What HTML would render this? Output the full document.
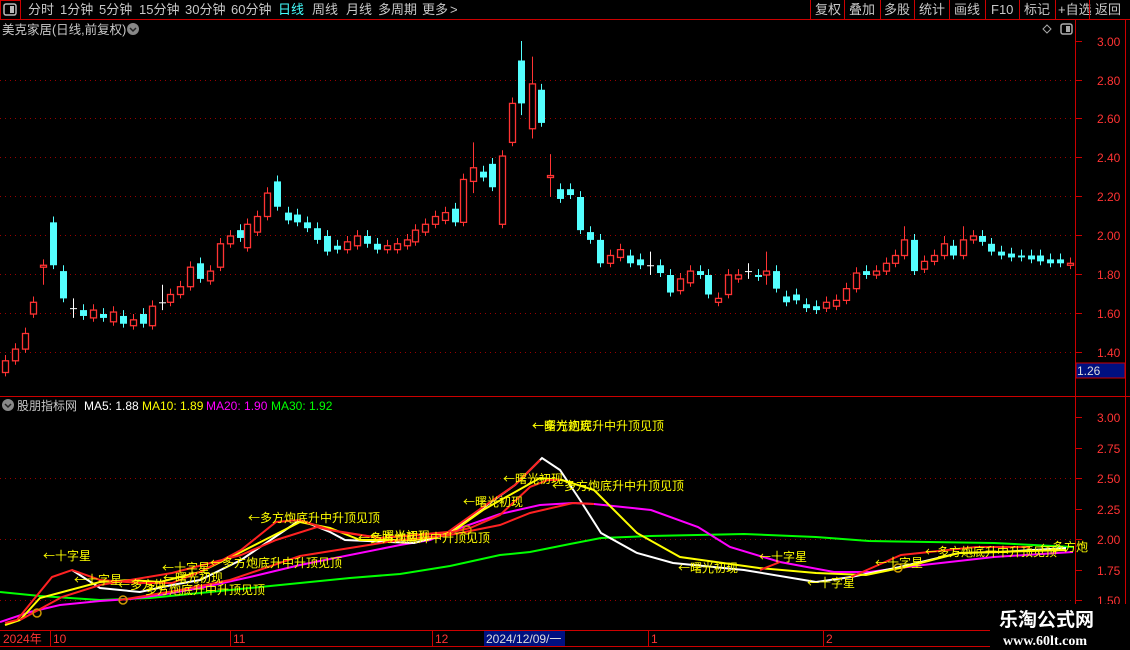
<!DOCTYPE html>
<html><head><meta charset="utf-8"><style>
html,body{margin:0;padding:0;background:#000;width:1130px;height:650px;overflow:hidden;font-family:"Liberation Sans","Noto Sans CJK SC",sans-serif;}
svg{position:absolute;left:0;top:0}
text{font-family:"Liberation Sans","Noto Sans CJK SC",sans-serif}
#lbl text{font-family:"Noto Sans CJK SC",sans-serif}
</style></head><body>
<svg id="s" width="1130" height="650" viewBox="0 0 1130 650">
<line x1="0" y1="19.5" x2="1130" y2="19.5" stroke="#c00" />
<rect x="0.5" y="0.5" width="20" height="19" fill="none" stroke="#c00"/>
<rect x="4" y="4" width="12" height="11" rx="2" fill="none" stroke="#bbb" stroke-width="1.5"/>
<rect x="10" y="6" width="4" height="7" fill="#bbb"/>
<g font-size="13" fill="#c8c8c8">
<text x="28" y="14">分时</text><text x="60" y="14">1分钟</text><text x="99" y="14">5分钟</text><text x="139" y="14">15分钟</text><text x="185" y="14">30分钟</text><text x="231" y="14">60分钟</text>
<text x="278" y="14" fill="#4ff">日线</text><text x="312" y="14">周线</text><text x="346" y="14">月线</text><text x="378" y="14">多周期</text><text x="422" y="14">更多</text><text x="450" y="14">&gt;</text>
<text x="815" y="14">复权</text><text x="849" y="14">叠加</text><text x="884" y="14">多股</text><text x="919" y="14">统计</text><text x="954" y="14">画线</text><text x="991" y="14">F10</text><text x="1024" y="14">标记</text><text x="1058" y="14">+自选</text><text x="1095" y="14">返回</text>
</g>
<g stroke="#c00"><line x1="810.5" y1="0" x2="810.5" y2="19"/><line x1="844.5" y1="0" x2="844.5" y2="19"/><line x1="880.5" y1="0" x2="880.5" y2="19"/><line x1="914.5" y1="0" x2="914.5" y2="19"/><line x1="949.5" y1="0" x2="949.5" y2="19"/><line x1="985.5" y1="0" x2="985.5" y2="19"/><line x1="1019.5" y1="0" x2="1019.5" y2="19"/><line x1="1055.5" y1="0" x2="1055.5" y2="19"/><line x1="1089.5" y1="0" x2="1089.5" y2="19"/></g>
<text x="2" y="34" font-size="12.5" fill="#c8c8c8">美克家居(日线,前复权)</text>
<circle cx="133" cy="29" r="6" fill="#888"/><path d="M130 28l3 3 3-3" stroke="#222" stroke-width="1.5" fill="none"/>
<path d="M1047 25l4 4-4 4-4-4z" fill="none" stroke="#aaa"/>
<rect x="1061" y="24" width="11" height="10" rx="2" fill="none" stroke="#aaa" stroke-width="1.5"/><rect x="1066" y="26" width="4" height="6" fill="#aaa"/>
<line x1="1075.5" y1="20" x2="1075.5" y2="646" stroke="#c00"/>
<line x1="1125.5" y1="20" x2="1125.5" y2="646" stroke="#c00"/>
<line x1="0" y1="396.5" x2="1130" y2="396.5" stroke="#c00"/>
<g id="grid"></g>
<rect x="1076" y="363" width="49" height="15" fill="#001080" stroke="#c00"/>
<text x="1077" y="375" font-size="12" fill="#ddd">1.26</text>
<circle cx="8" cy="405" r="6" fill="#888"/><path d="M5 404l3 3 3-3" stroke="#222" stroke-width="1.5" fill="none"/>
<g font-size="12"><text x="17" y="410" fill="#c8c8c8">股朋指标网</text><text x="84" y="410" fill="#fff">MA5: 1.88</text><text x="142" y="410" fill="#ff0">MA10: 1.89</text><text x="206" y="410" fill="#f0f">MA20: 1.90</text><text x="271" y="410" fill="#0f0">MA30: 1.92</text></g>
<g id="c"></g>
<g id="ind" fill="none" stroke-width="2"></g>
<g id="lbl" font-size="12" fill="#ff0"></g>
<line x1="0" y1="630.5" x2="1075" y2="630.5" stroke="#c00"/>
<line x1="0" y1="646.5" x2="1075" y2="646.5" stroke="#c00"/>
<g stroke="#c00"><line x1="50.5" y1="630" x2="50.5" y2="646"/><line x1="230.5" y1="630" x2="230.5" y2="646"/><line x1="432.5" y1="630" x2="432.5" y2="646"/><line x1="648.5" y1="630" x2="648.5" y2="646"/><line x1="823.5" y1="630" x2="823.5" y2="646"/></g>
<rect x="484" y="631" width="81" height="15" fill="#001080"/>
<g font-size="12" fill="#f33"><text x="3" y="643">2024年</text><text x="53" y="643">10</text><text x="233" y="643">11</text><text x="435" y="643">12</text><text x="651" y="643">1</text><text x="826" y="643">2</text></g>
<text x="486" y="643" font-size="12" fill="#ddd">2024/12/09/一</text>
<rect x="990" y="604" width="140" height="46" fill="#000"/>
<text x="999" y="626" font-size="19" font-weight="bold" fill="#fff">乐淘公式网</text>
<text x="1003" y="645" font-size="14" font-weight="bold" fill="#fff" style="font-family:'Liberation Serif',serif">www.60lt.com</text>
</svg>
<script>
var NS="http://www.w3.org/2000/svg";
function el(p,t,a,txt){var e=document.createElementNS(NS,t);for(var k in a)e.setAttribute(k,a[k]);if(txt)e.textContent=txt;document.getElementById(p).appendChild(e);return e;}
var up=[[3.00,41],[2.80,80],[2.60,118],[2.40,157],[2.20,196],[2.00,235],[1.80,274],[1.60,313],[1.40,352]];
up.forEach(function(v){if(v[0]<3)el("grid","line",{x1:0,x2:1075,y1:v[1]+.5,y2:v[1]+.5,stroke:"#900","stroke-dasharray":"1,4"});el("grid","text",{x:1097,y:v[1]+5,"font-size":12,fill:"#f33"},v[0].toFixed(2));el("grid","line",{x1:1076,x2:1082,y1:v[1]+.5,y2:v[1]+.5,stroke:"#c00"});});
var lo=[[3.00,417],[2.75,448],[2.50,478],[2.25,509],[2.00,539],[1.75,570],[1.50,600]];
lo.forEach(function(v){if(v[0]==2.5||v[0]==2||v[0]==1.5)el("grid","line",{x1:0,x2:1075,y1:v[1]+.5,y2:v[1]+.5,stroke:"#900","stroke-dasharray":"1,4"});el("grid","text",{x:1097,y:v[1]+5,"font-size":12,fill:"#f33"},v[0].toFixed(2));el("grid","line",{x1:1076,x2:1082,y1:v[1]+.5,y2:v[1]+.5,stroke:"#c00"});});
function Y(p){return 41+(3-p)*195;}
var d=[[5,1.30,1.36],[15,1.36,1.42],[25,1.42,1.50],[33,1.60,1.66],[43,1.84,1.85,1.88,1.75],[53,2.07,1.85],[63,1.82,1.68],[73,1.63,1.63,1.68,1.58],[83,1.62,1.59],[93,1.58,1.62],[103,1.60,1.58],[113,1.56,1.61],[123,1.59,1.55],[133,1.54,1.57],[143,1.60,1.55],[152,1.54,1.64],[162,1.66,1.66,1.75,1.62],[170,1.66,1.70],[180,1.70,1.74],[190,1.74,1.84],[200,1.86,1.78],[210,1.77,1.82],[220,1.84,1.96],[230,1.96,2.0],[240,2.03,1.99],[247,1.94,2.06],[257,2.02,2.10],[267,2.10,2.22],[277,2.28,2.15],[288,2.12,2.08],[297,2.11,2.07],[307,2.07,2.04],[317,2.04,1.98],[327,2.00,1.92],[337,1.95,1.93],[347,1.93,1.97],[357,1.95,2.00],[367,2.0,1.96],[377,1.96,1.93],[387,1.93,1.95],[397,1.93,1.96],[407,1.95,1.98],[415,1.97,2.03],[425,2.02,2.06],[435,2.06,2.10],[445,2.08,2.12],[455,2.14,2.07],[463,2.07,2.29],[473,2.28,2.35,2.48,2.22],[483,2.33,2.30],[492,2.37,2.25],[502,2.06,2.41],[512,2.48,2.68],[521,2.90,2.68,3.00,2.62],[532,2.55,2.78,2.92,2.5],[541,2.75,2.58],[550,2.30,2.31,2.42,2.2],[560,2.24,2.19],[570,2.24,2.21],[580,2.20,2.03],[590,2.02,1.98],[600,1.98,1.86],[610,1.86,1.90],[620,1.89,1.93],[630,1.90,1.86],[640,1.88,1.85],[650,1.85,1.85,1.92,1.80],[660,1.85,1.81],[670,1.80,1.71],[680,1.72,1.78],[690,1.76,1.82],[700,1.82,1.80],[708,1.80,1.70],[718,1.66,1.68],[728,1.70,1.80],[738,1.78,1.80],[748,1.82,1.82,1.86,1.78],[758,1.80,1.79],[766,1.80,1.82,1.92,1.75],[776,1.82,1.73],[786,1.69,1.66],[796,1.70,1.67],[806,1.65,1.63],[816,1.64,1.62],[826,1.63,1.66],[836,1.64,1.67],[846,1.67,1.73],[856,1.73,1.81],[866,1.82,1.80],[876,1.80,1.82],[886,1.82,1.86],[895,1.86,1.90],[904,1.90,1.98,2.05,1.88],[914,1.98,1.82],[924,1.83,1.87],[934,1.87,1.90],[944,1.90,1.96,2.0,1.88],[953,1.95,1.90],[963,1.90,1.98,2.05,1.88],[973,1.98,2.00],[982,2.0,1.97],[991,1.96,1.92],[1001,1.92,1.90],[1011,1.91,1.89],[1021,1.90,1.89],[1031,1.90,1.88],[1040,1.90,1.87],[1050,1.88,1.86],[1060,1.88,1.86],[1070,1.85,1.86]];
d.forEach(function(v){var x=v[0],o=v[1],c=v[2];var h=v[3]||Math.max(o,c)+0.03,l=v[4]||Math.min(o,c)-0.02;
var col=(o==c)?"#fff":(c>o?"#f33":"#54ffff");
el("c","line",{x1:x+.5,x2:x+.5,y1:Y(h),y2:Y(l),stroke:col,"stroke-width":1});
var t=Y(Math.max(o,c)),b=Y(Math.min(o,c));
if(o==c){el("c","line",{x1:x-3,x2:x+4,y1:t+.5,y2:t+.5,stroke:col});}
else if(c>o){el("c","rect",{x:x-2.5,y:t,width:6,height:Math.max(b-t,1),fill:"#000",stroke:col,"stroke-width":1.3});}
else{el("c","rect",{x:x-3,y:t,width:7,height:Math.max(b-t,1.5),fill:col});}});
function pl(c,pts,w){el("ind","polyline",{points:pts,stroke:c,"stroke-width":w||2});}
pl("#0f0","0,592 40,596 100,600 150,598 200,593 250,588 300,583 350,578 400,574 450,566 500,555 530,552 570,544 601,538 650,536 744,534 816,537 869,541 994,543 1073,547");
pl("#f0f","0,622 30,612 60,605 100,601 130,599 160,595 200,588 250,577 300,565 350,555 400,545 430,540 460,528 500,514 540,505 573,503 594,504 651,510 698,527 730,547 780,562 834,572 869,572 923,565 994,557 1073,552");
pl("#fff","72,570 100,588 140,592 172,585 200,580 241,560 300,520 330,532 345,540 414,543 448,534 483,508 515,485 542,458 560,470 580,500 601,533 637,553 673,563 744,570 816,582 851,577 900,567 959,553 1000,552 1066,548");
pl("#ff0","5,625 20,620 40,598 100,582 130,580 160,582 200,572 241,552 300,522 330,528 360,540 414,540 448,535 483,510 540,478 562,480 594,490 637,533 680,557 759,568 816,573 866,575 905,567 959,553 1066,550");
pl("#f22","5,623 17,620 52,577 72,570 100,580 140,583 172,583 200,572 241,550 276,522 300,520 330,530 380,538 448,532 483,507 515,485 540,460");
pl("#f22","20,620 62,597 100,585 172,573 241,555 276,540 317,527 340,532 380,538 448,533 470,528 500,515 530,487 548,480 560,480");
pl("#f22","120,600 180,590 230,580 300,556 350,548 400,540 450,535 500,525 530,513 573,503 594,504");
pl("#f22","851,577 901,555 976,547 1030,547");
pl("#f22","760,570 780,562");
[[37,613],[467,530],[898,568],[123,600]].forEach(function(p){el("ind","circle",{cx:p[0],cy:p[1],r:4,stroke:"#c90","stroke-width":1.5});});
var L=[["←曙光初现",532,430],["←多方炮底升中升顶见顶",532,430],["←曙光初现",503,483],["←多方炮底升中升顶见顶",552,490],["←曙光初现",463,506],["←多方炮底升中升顶见顶",248,522],["←多方炮底升中升顶见顶",358,542],["←曙光初现",370,540],["←十字星",43,560],["←十字星",74,584],["←多方炮",118,589],["←十字星",162,572],["←多方炮底升中升顶见顶",210,567],["←曙光初现",163,582],["多方炮底升中升顶见顶",145,594],["←十字星",759,561],["←曙光初现",678,572],["←十字星",807,587],["←十字星",875,567],["←多方炮底升中升顶见顶",925,556],["←多方炮",1040,551]];
L.forEach(function(v){el("lbl","text",{x:v[1],y:v[2]},v[0]);});
</script>
</body></html>
